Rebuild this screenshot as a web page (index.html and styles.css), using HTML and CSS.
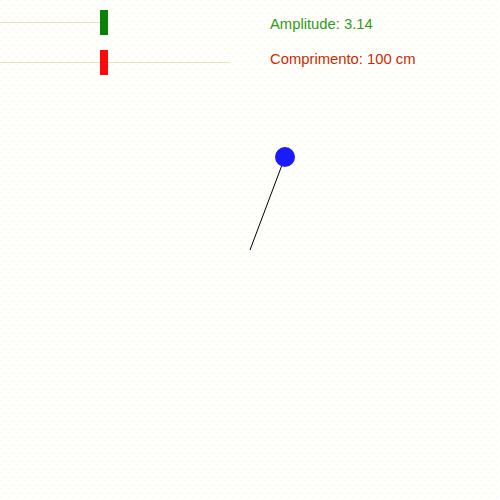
FILE: index.html
```html
<!DOCTYPE html>
<html>
<head>
<meta charset="utf-8">
<link rel="stylesheet" href="styles.css">
</head>
<body>
<div class="stage">
  <div class="controls">
    <div class="sliders">
      <div class="slider">
        <div class="track" style="width:100px"></div>
        <div class="thumb thumb-green"></div>
      </div>
      <div class="slider">
        <div class="track" style="width:230px"></div>
        <div class="thumb thumb-red"></div>
      </div>
    </div>
    <div class="labels">
      <div class="label label-green">Amplitude: 3.14</div>
      <div class="label label-red">Comprimento: 100 cm</div>
    </div>
  </div>
  <svg class="pendulum" width="500" height="500" viewBox="0 0 500 500">
    <line x1="250" y1="250" x2="285" y2="157" stroke="#000" stroke-width="1"/>
    <circle cx="285" cy="157" r="10" fill="#1a1aff"/>
  </svg>
</div>
</body>
</html>
```

FILE: styles.css
```css
html, body {
  margin: 0;
  padding: 0;
}
body {
  width: 500px;
  height: 500px;
  background-color: #fefefe;
  background-image:
    radial-gradient(circle at 4.5px 4.5px, #ffff80 0.6px, transparent 0.9px),
    radial-gradient(circle at 4.5px 4.5px, #ffff80 0.6px, transparent 0.9px);
  background-size: 8px 8px, 8px 8px;
  background-position: 0 0, 4px 4px;
  font-family: "Liberation Sans", Arial, sans-serif;
  overflow: hidden;
}
.stage {
  position: relative;
  width: 500px;
  height: 500px;
}
.controls {
  display: flex;
  align-items: flex-start;
}
.sliders {
  display: flex;
  flex-direction: column;
  gap: 15px;
  padding-top: 10px;
  width: 270px;
  flex: none;
}
.slider {
  position: relative;
  height: 25px;
}
.track {
  position: absolute;
  left: 0;
  top: 12px;
  height: 1px;
  background: #e8e4b8;
}
.thumb {
  position: absolute;
  left: 100px;
  top: 0;
  width: 8px;
  height: 25px;
}
.thumb-green { background: #0a820a; }
.thumb-red { background: #ff0a0a; }
.labels {
  display: flex;
  flex-direction: column;
  gap: 18px;
  padding-top: 16px;
}
.label {
  font-size: 14.8px;
  line-height: 17px;
}
.label-green { color: #33991a; }
.label-red { color: #cc2a00; }
.pendulum {
  position: absolute;
  left: 0;
  top: 0;
}
```
